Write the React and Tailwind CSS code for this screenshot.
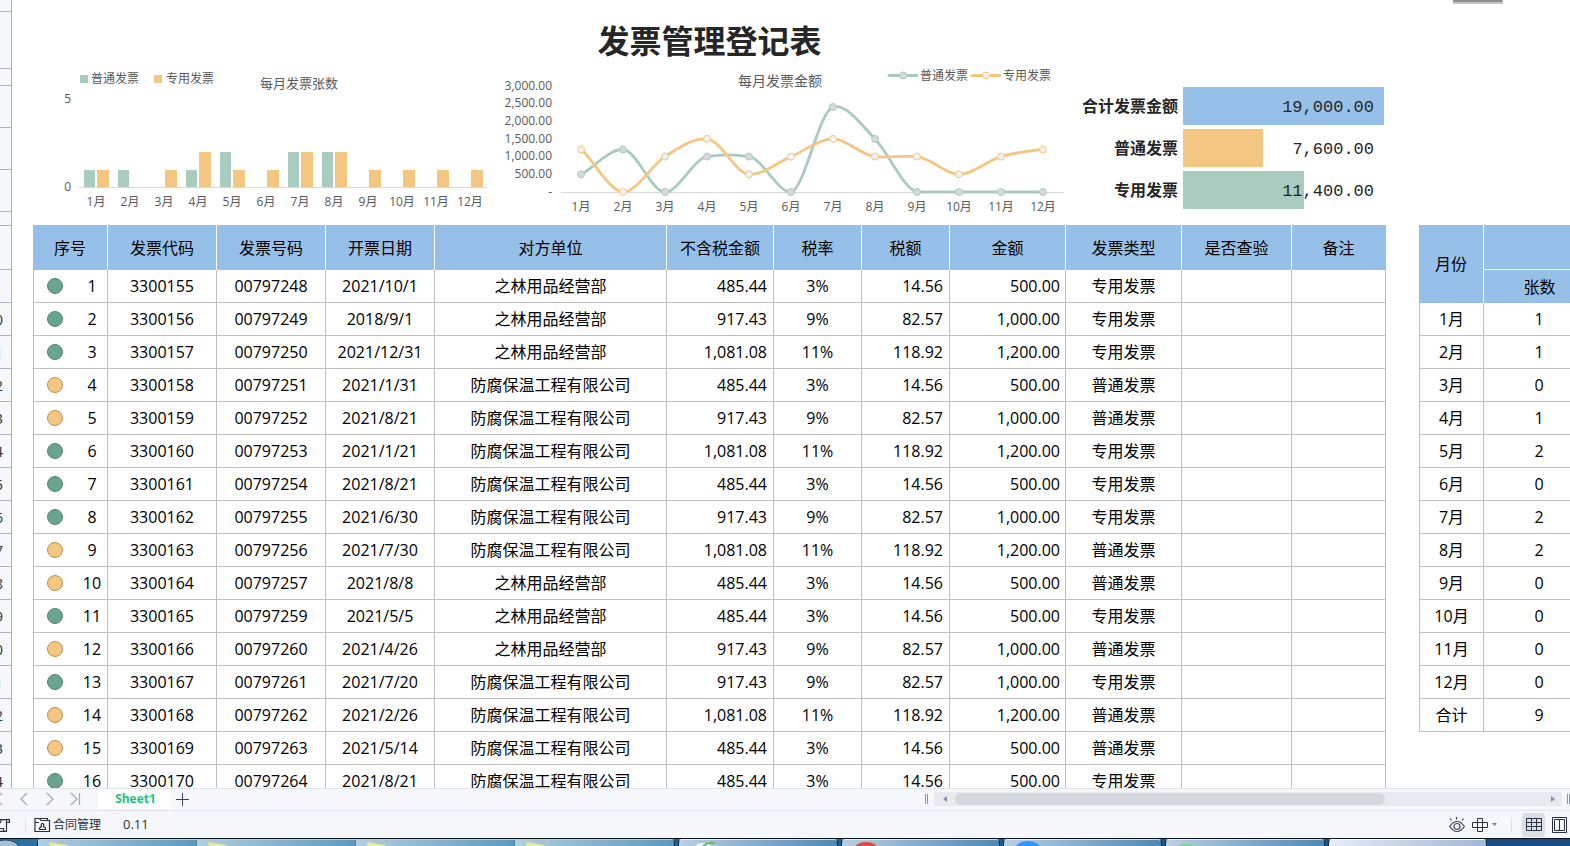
import React, { useState } from 'react';

const FONT = "font-['Open_Sans','Noto_Sans_CJK_SC',sans-serif]";
const MONTHS = ['1月', '2月', '3月', '4月', '5月', '6月', '7月', '8月', '9月', '10月', '11月', '12月'];

const A = '之林用品经营部';
const B = '防腐保温工程有限公司';

const TAXES = {
  3: ['485.44', '3%', '14.56', '500.00'],
  9: ['917.43', '9%', '82.57', '1,000.00'],
  11: ['1,081.08', '11%', '118.92', '1,200.00'],
};

// [发票代码, 发票号码, 开票日期, 对方单位, 税率, 专用?]
const INVOICES = [
  ['3300155', '00797248', '2021/10/1', A, 3, true],
  ['3300156', '00797249', '2018/9/1', A, 9, true],
  ['3300157', '00797250', '2021/12/31', A, 11, true],
  ['3300158', '00797251', '2021/1/31', B, 3, false],
  ['3300159', '00797252', '2021/8/21', B, 9, false],
  ['3300160', '00797253', '2021/1/21', B, 11, true],
  ['3300161', '00797254', '2021/8/21', B, 3, true],
  ['3300162', '00797255', '2021/6/30', B, 9, true],
  ['3300163', '00797256', '2021/7/30', B, 11, false],
  ['3300164', '00797257', '2021/8/8', A, 3, false],
  ['3300165', '00797259', '2021/5/5', A, 3, true],
  ['3300166', '00797260', '2021/4/26', A, 9, false],
  ['3300167', '00797261', '2021/7/20', B, 9, true],
  ['3300168', '00797262', '2021/2/26', B, 11, false],
  ['3300169', '00797263', '2021/5/14', B, 3, false],
  ['3300170', '00797264', '2021/8/21', B, 3, true],
];

const COLUMNS = [
  ['序号', 'w-[75px]'],
  ['发票代码', 'w-[109px]'],
  ['发票号码', 'w-[109px]'],
  ['开票日期', 'w-[109px]'],
  ['对方单位', 'w-[232px]'],
  ['不含税金额', 'w-[107px]'],
  ['税率', 'w-[88px]'],
  ['税额', 'w-[88px]'],
  ['金额', 'w-[116px]'],
  ['发票类型', 'w-[116px]'],
  ['是否查验', 'w-[110px]'],
  ['备注', 'w-[94px]'],
];

const MONTHLY = [1, 1, 0, 1, 2, 0, 2, 2, 0, 0, 0, 0];

const RowHeaders = () => {
  const top = ['h-3', 'h-[57px]', 'h-[17px]', 'h-[42px]', 'h-[42px]', 'h-[42px]', 'h-[14px]', 'h-[44px]', 'h-[33px]'];
  return (
    <div className="w-3 shrink-0 overflow-hidden border-r border-[#a9b0c8] bg-[#f5f7fa]">
      {top.map((h, i) => (
        <div key={i} className={`${h} border-b border-[#a9b0c8]`} />
      ))}
      {INVOICES.slice(0, 15).map((_, i) => (
        <div key={i} className="flex h-[33px] items-center justify-end border-b border-[#a9b0c8] pr-2 text-[15px] text-[#333]">
          {i + 10}
        </div>
      ))}
    </div>
  );
};

const BarChart = () => {
  const general = [1, 1, 0, 1, 2, 0, 2, 2, 0, 0, 0, 0];
  const special = [1, 0, 1, 2, 1, 1, 2, 2, 1, 1, 1, 1];
  return (
    <svg width="460" height="157" className="shrink-0" fill="#595959" fontSize="12" role="img" aria-label="每月发票张数">
      <rect x="47" y="7" width="8" height="8" fill="#a9cbc0" />
      <text x="58" y="15">普通发票</text>
      <rect x="121" y="7" width="8" height="8" fill="#f3c782" />
      <text x="133" y="15">专用发票</text>
      <text x="266" y="20" fontSize="13" textAnchor="middle">每月发票张数</text>
      <text x="38" y="35" textAnchor="end">5</text>
      <text x="38" y="123" textAnchor="end">0</text>
      {MONTHS.map((m, i) => (
        <g key={m}>
          <rect x={51 + 34 * i} y={119 - Math.floor(17.6 * general[i])} width="11" height={Math.floor(17.6 * general[i])} fill="#a9cbc0" />
          <rect x={64 + 34 * i} y={119 - Math.floor(17.6 * special[i])} width="12" height={Math.floor(17.6 * special[i])} fill="#f3c782" />
          <text x={63 + 34 * i} y="138" textAnchor="middle">{m}</text>
        </g>
      ))}
      <path d="M46 119.5H454" stroke="#d9d9d9" />
    </svg>
  );
};

const toPoints = (values) => values.map((v, i) => [88 + 42 * i, 124 - v * 0.0354]);

const smooth = (pts) => {
  const tangent = (i) => {
    const p = pts[i - 1] || pts[i];
    const n = pts[i + 1] || pts[i];
    const turning = (pts[i][1] - p[1]) * (n[1] - pts[i][1]) <= 0;
    return [(n[0] - p[0]) / 6, ((n[1] - p[1]) / 6) * (turning ? 0.4 : 1)];
  };
  let d = `M${pts[0]}`;
  for (let i = 1; i < pts.length; i++) {
    const a = tangent(i - 1);
    const b = tangent(i);
    const y1 = Math.min(pts[i - 1][1] + a[1], 124);
    const y2 = Math.min(pts[i][1] - b[1], 124);
    d += `C${pts[i - 1][0] + a[0]} ${y1} ${pts[i][0] - b[0]} ${y2} ${pts[i]}`;
  }
  return d;
};

const Series = ({ values, color, dot }) => {
  const pts = toPoints(values);
  return (
    <g>
      <path d={smooth(pts)} fill="none" stroke={color} strokeWidth="2.8" />
      {pts.map(([x, y]) => (
        <circle key={x} cx={x} cy={y} r="3.5" fill={dot} stroke={color} />
      ))}
    </g>
  );
};

const LineChart = () => (
  <svg width="577" height="157" className="shrink-0" fill="#595959" fontSize="12" role="img" aria-label="每月发票金额">
    <text x="287" y="18" fontSize="14" textAnchor="middle">每月发票金额</text>
    {['3,000.00', '2,500.00', '2,000.00', '1,500.00', '1,000.00', '500.00', '-'].map((t, i) => (
      <text key={t} x="59" y={22 + Math.floor(17.7 * i)} textAnchor="end">{t}</text>
    ))}
    <path d="M68 124.5H571" stroke="#d9d9d9" />
    <Series values={[500, 1200, 0, 1000, 1000, 0, 2400, 1500, 0, 0, 0, 0]} color="#a9cbc0" dot="#d9d9d9" />
    <Series values={[1200, 0, 1000, 1500, 500, 1000, 1500, 1000, 1000, 500, 1000, 1200]} color="#f3c782" dot="#f2f2f2" />
    {MONTHS.map((m, i) => (
      <text key={m} x={88 + 42 * i} y="143" textAnchor="middle">{m}</text>
    ))}
    <path d="M396 7.5H424" stroke="#a9cbc0" strokeWidth="2.8" strokeLinecap="round" />
    <circle cx="410" cy="7.5" r="3.5" fill="#d9d9d9" stroke="#a9cbc0" />
    <text x="427" y="12">普通发票</text>
    <path d="M479 7.5H507" stroke="#f3c782" strokeWidth="2.8" strokeLinecap="round" />
    <circle cx="493" cy="7.5" r="3.5" fill="#f2f2f2" stroke="#f3c782" />
    <text x="510" y="12">专用发票</text>
  </svg>
);

const Totals = () => {
  const rows = [
    ['合计发票金额', '19,000.00', 'w-full bg-[#96c0e8]'],
    ['普通发票', '7,600.00', 'w-2/5 bg-[#f3c782]'],
    ['专用发票', '11,400.00', 'w-3/5 bg-[#a9cbc0]'],
  ];
  return (
    <div className="flex w-[314px] shrink-0 flex-col gap-1 pt-[19px] text-[#262626]">
      {rows.map(([label, value, bar]) => (
        <div key={label} className="flex h-[38px] items-center justify-end gap-[5px]">
          <span className="text-base font-bold">{label}</span>
          <div className="relative flex h-full w-[201px] items-center justify-end">
            <div className={`absolute inset-y-0 left-0 ${bar}`} />
            <span className="relative pt-1 pr-[10px] font-['Liberation_Mono',monospace] text-[17px]">{value}</span>
          </div>
        </div>
      ))}
    </div>
  );
};

const TD = 'h-[33px] border-r border-b border-[#bfbfbf] p-0 leading-8';

const InvoiceTable = () => (
  <table className="w-[1353px] shrink-0 table-fixed border-separate border-spacing-0 self-start text-center text-base">
    <thead>
      <tr>
        {COLUMNS.map(([name, width]) => (
          <th key={name} className={`${width} h-[45px] border-r border-white bg-[#96c0e8] p-0 font-normal last:border-[#96c0e8]`}>{name}</th>
        ))}
      </tr>
    </thead>
    <tbody>
      {INVOICES.map(([code, number, date, company, rate, special], i) => (
        <tr key={number}>
          <td className={`${TD} border-l`}>
            <div className="flex items-center justify-between pl-[13px]">
              <span className={`size-4 rounded-full border ${special ? 'border-[#4f8873] bg-[#6aa48f]' : 'border-[#b8934a] bg-[#f3c782]'}`} />
              <span className="w-[30px]">{i + 1}</span>
            </div>
          </td>
          <td className={TD}>{code}</td>
          <td className={TD}>{number}</td>
          <td className={TD}>{date}</td>
          <td className={TD}>{company}</td>
          <td className={`${TD} pr-[6px] text-right`}>{TAXES[rate][0]}</td>
          <td className={TD}>{TAXES[rate][1]}</td>
          <td className={`${TD} pr-[6px] text-right`}>{TAXES[rate][2]}</td>
          <td className={`${TD} pr-[5px] text-right`}>{TAXES[rate][3]}</td>
          <td className={TD}>{special ? '专用发票' : '普通发票'}</td>
          <td className={TD} />
          <td className={TD} />
        </tr>
      ))}
    </tbody>
  </table>
);

const MonthTable = () => (
  <table className="w-[176px] shrink-0 table-fixed border-separate border-spacing-0 self-start text-center text-base">
    <thead>
      <tr>
        <th rowSpan="2" className="w-[65px] border-r border-white bg-[#96c0e8] p-0 font-normal">月份</th>
        <th className="h-[45px] border-b border-white bg-[#96c0e8] p-0" />
      </tr>
      <tr>
        <th className="h-[33px] bg-[#96c0e8] p-0 font-normal leading-8">张数</th>
      </tr>
    </thead>
    <tbody>
      {MONTHS.map((m, i) => (
        <tr key={m}>
          <td className={`${TD} border-l`}>{m}</td>
          <td className={TD}>{MONTHLY[i]}</td>
        </tr>
      ))}
      <tr>
        <td className={`${TD} border-l`}>合计</td>
        <td className={TD}>9</td>
      </tr>
    </tbody>
  </table>
);

const NavIcon = ({ d, label }) => (
  <button aria-label={label} className="flex h-5 w-[26px] shrink-0 items-center justify-center">
    <svg width="14" height="14" fill="none" stroke="#a3a7b0" strokeWidth="1.2">
      <path d={d} />
    </svg>
  </button>
);

const SheetTabs = () => (
  <div className="flex h-[23px] shrink-0 overflow-hidden border-t border-b border-[#e0e3ea] bg-[#f5f7fa]">
    <div className="-ml-[15px] flex w-[113px] shrink-0 items-center pb-px">
      <NavIcon label="第一张" d="M4 2v10M11 1L5 7l6 6" />
      <NavIcon label="上一张" d="M10 1L4 7l6 6" />
      <NavIcon label="下一张" d="M4 1l6 6-6 6" />
      <NavIcon label="最后一张" d="M2 1l6 6-6 6M10.5 1v12" />
    </div>
    <button className="h-[20px] w-[73px] shrink-0 bg-white pl-[2px] text-xs font-bold text-[#1fbf83]">Sheet1</button>
    <button aria-label="新建工作表" className="flex w-[23px] shrink-0 items-center justify-center">
      <svg width="13" height="13" stroke="#3b4256">
        <path d="M6.5 0v13M0 6.5h13" />
      </svg>
    </button>
    <div className="flex-1" />
    <div className="flex w-[645px] shrink-0 items-center pb-px">
      <span className="mr-[6px] h-[10px] w-[3px] border-x border-[#8b93a8]" />
      <div className="flex h-[14px] flex-1 items-center bg-[#e8eaf0]">
        <button aria-label="向左滚动" className="flex w-[21px] items-center justify-center">
          <svg width="4" height="6" fill="#8591b0"><path d="M4 0v6L0 3z" /></svg>
        </button>
        <div className="flex-1">
          <div className="h-3 w-[73%] rounded-full bg-[#d4d7df]" />
        </div>
        <button aria-label="向右滚动" className="flex w-[18px] items-center justify-center">
          <svg width="4" height="6" fill="#8591b0"><path d="M0 0v6l4-3z" /></svg>
        </button>
      </div>
      <span className="ml-[5px] h-[10px] w-[3px] border-x border-[#8b93a8]" />
    </div>
  </div>
);

const StatusBar = () => {
  const [gridView, setGridView] = useState(true);
  return (
    <div className="flex h-[27px] shrink-0 items-center overflow-hidden bg-[#f5f7fa] text-xs text-[#2b3040]">
      <svg width="10" height="16" fill="none" stroke="#2b3040" strokeWidth="1.2" className="shrink-0">
        <path d="M0 2.6H9.4V5.5H6.5V14.4H0M6.5 5.5V3M0 11.5H3.5V14.4M0 6q1.5-1 1-3.4" />
      </svg>
      <span className="ml-[15px] h-[14px] w-px bg-[#dde0e6]" />
      <button className="ml-2 flex items-center gap-[2px]">
        <svg width="17" height="16" fill="none" stroke="#2b3040" strokeWidth="1.2">
          <path d="M1 13.5V1.5H5.500L7 3.500H15.5V14.5H1V5.500H5M3 1.500H13.5V3.500" />
          <path d="M5.5 12.5V11L7.5 9.5Q6.5 6.5 8.5 6.5T9.5 9.5L11.5 11V12.5Z" />
        </svg>
        合同管理
      </button>
      <span className="ml-[22px] text-[13px]">0.11</span>
      <div className="flex-1" />
      <div className="flex w-[121px] shrink-0 items-center">
        <button aria-label="护眼模式">
          <svg width="16" height="16" fill="none" stroke="#3b4256" strokeWidth="1.2">
            <path d="M.6 9.5Q4 4.5 8 4.5T15.4 9.5Q12 14.5 8 14.5T.6 9.5ZM7.5 0V2.5M1 1.5L2.5 3.5M14.5 1.5L13 3.5" />
            <circle cx="8" cy="9.5" r="3" />
          </svg>
        </button>
        <button aria-label="阅读模式" className="ml-[7px] flex items-center gap-1">
          <svg width="16" height="14" fill="none" stroke="#2b3040">
            <path d="M5.5.5H10.5V13.5H5.5ZM.5 4.5H15.5V9.5H.5Z" />
          </svg>
          <svg width="5" height="3" fill="#7580a0"><path d="M0 0h5L2.5 3z" /></svg>
        </button>
        <span className="ml-[14px] h-[14px] w-px bg-[#dde0e6]" />
        <button
          aria-label="普通视图"
          onClick={() => setGridView(!gridView)}
          className={`ml-[10px] flex h-6 w-[23px] shrink-0 items-center justify-center rounded-sm ${gridView ? 'bg-[#dadee5]' : ''}`}
        >
          <svg width="16" height="13" fill="none" stroke="#2b3040">
            <path d="M.5.5H15.5V12.5H.5ZM.5 4.5H15.5M.5 8.5H15.5M5.5.5V12.5M10.5.5V12.5" />
          </svg>
        </button>
        <button aria-label="分页预览" className="ml-[7px] shrink-0">
          <svg width="15" height="16" fill="none" stroke="#2b3040">
            <path d="M.5.5H14.5V15.5H.5ZM2.5 2.5H12.5V13.5H2.5ZM7.5 2.5V13.5" />
          </svg>
        </button>
      </div>
    </div>
  );
};

const Folder = () => (
  <svg width="20" height="4" className="ml-[11px]">
    <path d="M0 0l18 3l1 1H1z" fill="#f0e79a" />
  </svg>
);

const TASKS = [
  <svg width="24" height="4" className="ml-4">
    <ellipse cx="8" cy="5" rx="8" ry="4" fill="#eef4f8" />
    <path d="M8 4Q13 0 20 1" stroke="#6cc24a" strokeWidth="2" fill="none" />
  </svg>,
  <svg width="20" height="4" className="ml-[14px]"><ellipse cx="10" cy="8" rx="12" ry="8" fill="#e2493a" /></svg>,
  <svg width="24" height="5" className="ml-3"><ellipse cx="12" cy="10" rx="14" ry="10" fill="#3395ff" /></svg>,
  <svg width="16" height="2" className="ml-3"><ellipse cx="8" cy="4" rx="9" ry="4" fill="#6fdc7c" /></svg>,
];

const TaskBar = () => (
  <div className="flex h-2 shrink-0 overflow-hidden border-t border-[#06121f] bg-linear-to-r from-[#2d6f9c] to-[#194a80]">
    <div className="w-[37px] shrink-0">
      <svg width="20" height="7"><ellipse cx="5" cy="9" rx="14" ry="8" fill="#a9bfcf" stroke="#1c4a70" /></svg>
    </div>
    <div className="flex flex-[643] rounded-t-sm border-t border-r border-l border-t-white/70 border-r-[#0d2f4d] border-l-[#0d2f4d]">
      {[0, 1, 2, 3].map((i) => (
        <button key={i} aria-label="文件夹" className="flex flex-1 items-end border-r border-[#4d87a8] bg-linear-to-r from-[#b4cede] to-[#5d99bb]">
          <Folder />
        </button>
      ))}
    </div>
    {TASKS.map((icon, i) => (
      <button key={i} aria-label="任务" className="ml-[3px] flex flex-[159] items-end rounded-t-sm border border-b-0 border-t-white/70 border-r-[#0d2f4d] border-l-[#0d2f4d] bg-linear-to-r from-[#bccfe0] to-[#4f88b3]">
        {icon}
      </button>
    ))}
    <button aria-label="任务" className="ml-[3px] flex-[159] rounded-t-sm border border-b-0 border-t-white border-r-[#0d2f4d] border-l-[#0d2f4d] bg-linear-to-r from-[#e6edf5] to-[#a3b7d2]" />
    <div className="flex-[84]" />
  </div>
);

const App = () => (
  <div className={`flex h-screen flex-col overflow-hidden bg-white text-black ${FONT}`}>
    <main className="relative flex min-h-0 flex-1 overflow-hidden">
      <RowHeaders />
      <div className="min-w-0 flex-1 overflow-hidden pl-[21px]">
        <div className="w-[1353px]">
          <h1 className="h-[68px] pt-[15px] text-center text-[32px] leading-[52px] font-bold text-[#262626]">发票管理登记表</h1>
          <div className="flex h-[157px]">
            <BarChart />
            <LineChart />
            <Totals />
          </div>
        </div>
        <div className="flex gap-[33px]">
          <InvoiceTable />
          <MonthTable />
        </div>
      </div>
      {/* 浮动工具条的下沿 */}
      <div className="absolute top-0 right-[67px] h-1 w-[50px] border-r border-b-2 border-[#c4c4c4] bg-[#8f8f8f]" />
    </main>
    <SheetTabs />
    <StatusBar />
    <TaskBar />
  </div>
);

export default App;
